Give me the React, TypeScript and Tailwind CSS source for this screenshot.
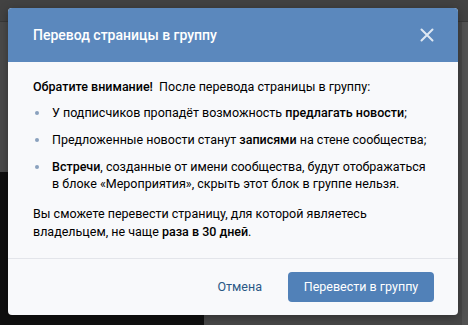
import React from 'react';

const font = { fontFamily: 'Roboto, "Open Sans", "Liberation Sans", sans-serif' };

function Backdrop() {
  return (
    <div className="absolute inset-0 flex flex-col bg-[#474747]">
      <div className="h-[22px] border-b border-[#383838] bg-[#424242]" />
      <div className="flex flex-1">
        <div className="flex w-[204px] flex-col">
          <div className="h-[150px] bg-[#4a4a4a]" />
          <div className="flex-1 bg-[#101010]" />
        </div>
        <div className="flex-1 bg-[#474747]" />
        <div className="w-[6px] bg-[#525252]" />
      </div>
    </div>
  );
}

function Bullet({ children }: { children: React.ReactNode }) {
  return (
    <li className="flex">
      <span className="flex w-[19px] shrink-0 items-start pt-[7px] pl-[2px]">
        <span className="h-[4px] w-[4px] rounded-full bg-[#8aa1bd]" />
      </span>
      <span>{children}</span>
    </li>
  );
}

export default function App() {
  return (
    <div className="relative h-[325px] w-[468px] overflow-hidden" style={font}>
      <Backdrop />

      {/* Modal */}
      <div className="absolute left-[8px] top-[8px] w-[450px] overflow-hidden rounded-[4px] bg-[#f8f9fb] shadow-[0_2px_10px_rgba(0,0,0,0.35)]">
        <div className="flex h-[54px] items-center justify-between bg-[#5b88bd] pl-[25px] pr-[25px]">
          <span className="text-[14px] font-medium text-white">Перевод страницы в группу</span>
          <svg width="14" height="14" viewBox="0 0 14 14" className="mr-[-1px]">
            <path d="M1.5 1.5 L12.5 12.5 M12.5 1.5 L1.5 12.5" stroke="#dfe8f3" strokeWidth="2" strokeLinecap="round" />
          </svg>
        </div>

        <div className="border-b border-[#e3e5ea] px-[25px] pt-[16px] pb-[17px] text-[12.5px] leading-[17px] text-[#000]">
          <p>
            <b className="font-medium">Обратите внимание!</b>&nbsp; После перевода страницы в группу:
          </p>
          <ul className="mt-[9px] flex flex-col gap-[10px]">
            <Bullet>
              У подписчиков пропадёт возможность <b className="font-medium">предлагать новости</b>;
            </Bullet>
            <Bullet>
              Предложенные новости станут <b className="font-medium">записями</b> на стене сообщества;
            </Bullet>
            <Bullet>
              <b className="font-medium">Встречи</b>, созданные от имени сообщества, будут отображаться в блоке
              «Мероприятия», скрыть этот блок в группе нельзя.
            </Bullet>
          </ul>
          <p className="mt-[13px] leading-[18px]">
            Вы сможете перевести страницу, для которой являетесь владельцем, не чаще{' '}
            <b className="font-medium">раза в 30 дней</b>.
          </p>
        </div>

        <div className="flex h-[56px] items-center justify-end gap-[10px] pr-[24px]">
          <button className="px-[16px] py-[6px] text-[12.5px] text-[#2a5885]">Отмена</button>
          <button className="h-[30px] w-[146px] rounded-[4px] bg-[#5181b8] text-[12.5px] text-white">
            Перевести в группу
          </button>
        </div>
      </div>
    </div>
  );
}
